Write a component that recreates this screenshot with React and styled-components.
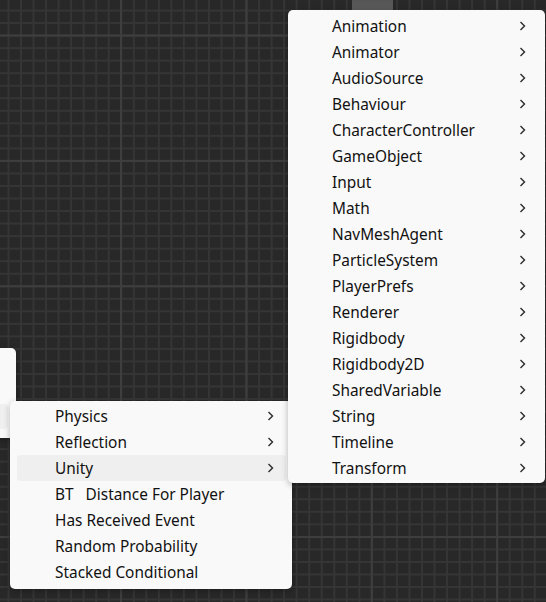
import React from 'react';
import styled, { createGlobalStyle } from 'styled-components';

const GlobalStyle = createGlobalStyle`
  html, body {
    margin: 0;
    padding: 0;
    background: #282828;
  }
  * {
    box-sizing: border-box;
  }
`;

const unityItems = [
  'Animation',
  'Animator',
  'AudioSource',
  'Behaviour',
  'CharacterController',
  'GameObject',
  'Input',
  'Math',
  'NavMeshAgent',
  'ParticleSystem',
  'PlayerPrefs',
  'Renderer',
  'Rigidbody',
  'Rigidbody2D',
  'SharedVariable',
  'String',
  'Timeline',
  'Transform',
];

const conditionalItems = [
  { label: 'Physics', sub: true },
  { label: 'Reflection', sub: true },
  { label: 'Unity', sub: true, active: true },
  { label: 'BT\u00a0\u00a0\u00a0Distance For Player' },
  { label: 'Has Received Event' },
  { label: 'Random Probability' },
  { label: 'Stacked Conditional' },
];

const Chevron = () => (
  <ChevronIcon width="7" height="10" viewBox="0 0 7 10">
    <path d="M1.5 1 L5.5 5 L1.5 9" fill="none" stroke="#2b2b2b" strokeWidth="1.4" />
  </ChevronIcon>
);

const MenuRow = ({ label, sub, active }) => (
  <Row $active={active}>
    <RowLabel>{label}</RowLabel>
    {sub && <Chevron />}
  </Row>
);

const App = () => {
  return (
    <>
      <GlobalStyle />
      <Canvas>
        <NodeTab />
        <ParentMenu>
          <ParentHighlight />
        </ParentMenu>
        <ConditionalMenu>
          {conditionalItems.map((item) => (
            <MenuRow key={item.label} {...item} />
          ))}
        </ConditionalMenu>
        <UnityMenu>
          {unityItems.map((label) => (
            <MenuRow key={label} label={label} sub />
          ))}
        </UnityMenu>
      </Canvas>
    </>
  );
};

export default App;

const Canvas = styled.div`
  position: relative;
  width: 546px;
  height: 602px;
  overflow: hidden;
  background-color: #282828;
  background-image:
    linear-gradient(to right, #3e3e3e 2px, transparent 2px),
    linear-gradient(to bottom, #3e3e3e 2px, transparent 2px),
    linear-gradient(to right, #353535 1.5px, transparent 1.5px),
    linear-gradient(to bottom, #353535 1.5px, transparent 1.5px);
  background-size: 125.4px 125.4px, 125.4px 125.4px, 12.54px 12.54px, 12.54px 12.54px;
  background-position: 120px 0, 0 34.5px, 7.5px 0, 0 9.6px;
  font-family: 'Noto Sans', 'Noto Sans CJK SC', sans-serif;
`;

const NodeTab = styled.div`
  position: absolute;
  left: 352px;
  top: 0;
  width: 41px;
  height: 12px;
  background: linear-gradient(to bottom, #555555, #5c5c5c);
`;

const Menu = styled.div`
  position: absolute;
  display: flex;
  flex-direction: column;
  background: #f9f9f9;
  border-radius: 5px;
  box-shadow: 0 2px 6px rgba(0, 0, 0, 0.28);
`;

const ParentMenu = styled(Menu)`
  left: -200px;
  top: 348px;
  width: 216px;
  height: 90px;
  padding: 56px 8px 0 7px;
`;

const ParentHighlight = styled.div`
  height: 25px;
  border-radius: 4px;
  background: #efefef;
`;

const ConditionalMenu = styled(Menu)`
  left: 10px;
  top: 401px;
  width: 282px;
  padding: 2px 6px 4px 7px;
`;

const UnityMenu = styled(Menu)`
  left: 288px;
  top: 10px;
  width: 257px;
  padding: 3px 7px 2px 6px;
  z-index: 2;
`;

const Row = styled.div`
  display: flex;
  align-items: center;
  justify-content: space-between;
  height: 26px;
  padding: 0 12px 0 38px;
  border-radius: 4px;
  background: ${(p) => (p.$active ? '#efefef' : 'transparent')};
  color: #111111;
`;

const RowLabel = styled.span`
  font-size: 15.4px;
  line-height: 26px;
  padding-top: 2px;
  white-space: pre;
`;

const ChevronIcon = styled.svg`
  display: block;
  flex-shrink: 0;
`;
